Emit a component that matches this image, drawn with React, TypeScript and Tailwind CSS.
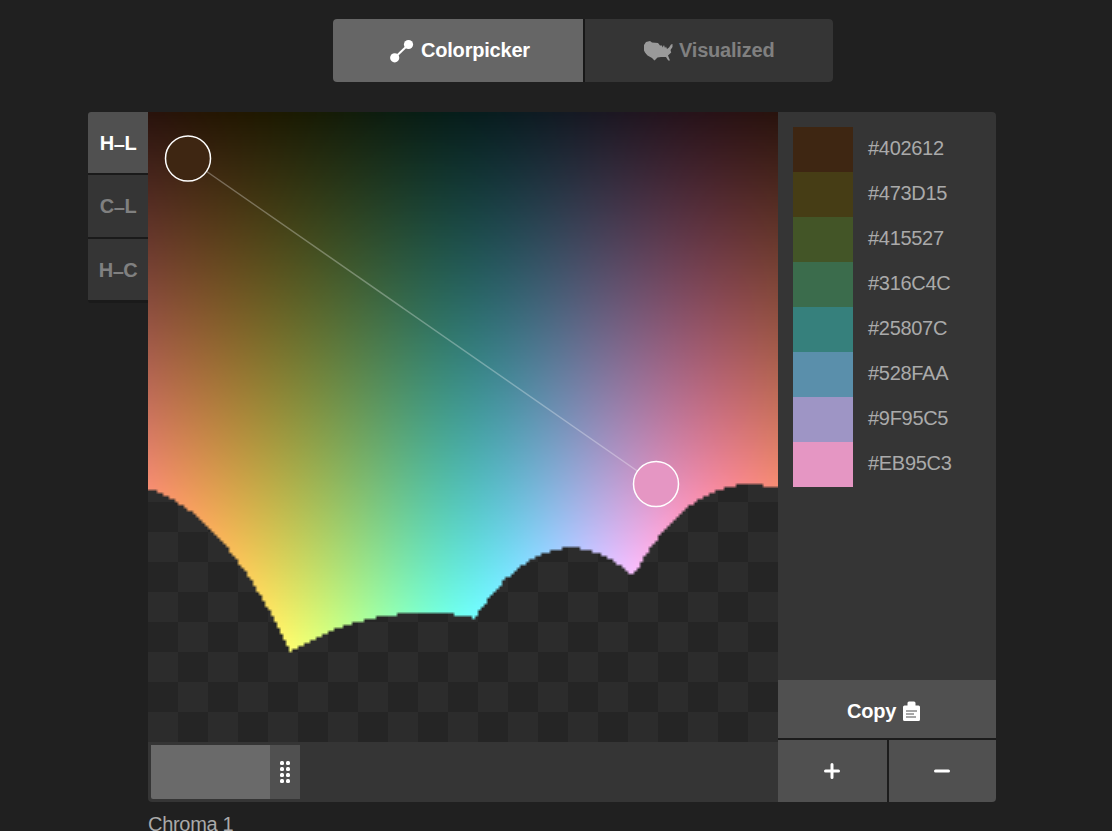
import { useEffect, useRef } from "react";

const SIZE = 210;
const MAX_LIGHTNESS = 1.7;
const CHROMA = 1;

const palette = ["#402612", "#473D15", "#415527", "#316C4C", "#25807C", "#528FAA", "#9F95C5", "#EB95C3"];
const swatches = ["#3E2612", "#463D15", "#435527", "#3B6C4C", "#36807C", "#5A8FAB", "#9E95C5", "#E596C3"];

function finv(t: number) {
  return t > 6 / 29 ? t * t * t : 3 * (6 / 29) * (6 / 29) * (t - 4 / 29);
}

function gamma(v: number) {
  return v <= 0.0031308 ? 12.92 * v : 1.055 * Math.pow(v, 1 / 2.4) - 0.055;
}

const clamp = (v: number) => Math.max(0, Math.min(1, v));

function hclToLinear(h: number, c: number, l: number): number[] {
  const tau = Math.PI * 2;
  const lightness = l * 0.61 + 0.09;
  const angle = tau / 6 - (h / 360) * tau;
  const r = (l * 0.311 + 0.125) * c;
  const a = Math.sin(angle) * r;
  const b = Math.cos(angle) * r;
  const sl = (lightness + 0.16) / 1.16;
  const y = finv(sl);
  const x = 0.96421 * finv(sl + a / 5);
  const z = 0.82519 * finv(sl - b / 2);
  return [
    3.2406 * x - 1.5372 * y - 0.4986 * z,
    -0.9689 * x + 1.8758 * y + 0.0415 * z,
    0.0557 * x - 0.204 * y + 1.057 * z,
  ];
}

function Spectrum() {
  const ref = useRef<HTMLCanvasElement>(null);
  useEffect(() => {
    const ctx = ref.current?.getContext("2d");
    if (!ctx) return;
    const image = ctx.createImageData(SIZE, SIZE);
    for (let y = 0; y < SIZE; y++) {
      for (let x = 0; x < SIZE; x++) {
        const linear = hclToLinear((x / SIZE) * 360, CHROMA, (y / SIZE) * MAX_LIGHTNESS);
        const inside = Math.max(...linear.map(gamma)) <= 1.001;
        const [r, g, b] = linear.map(clamp);
        const i = (y * SIZE + x) * 4;
        image.data[i] = gamma(0.91 * r + 0.09 * g) * 255;
        image.data[i + 1] = gamma(g) * 255;
        image.data[i + 2] = gamma(b) * 255;
        image.data[i + 3] = inside ? 255 : 0;
      }
    }
    ctx.putImageData(image, 0, 0);
  }, []);
  return <canvas ref={ref} width={SIZE} height={SIZE} className="block h-[630px] w-[630px]" />;
}

function SideTab({ from, to, active }: { from: string; to: string; active?: boolean }) {
  return (
    <button
      className={
        active
          ? "flex h-[61px] w-full shrink-0 items-center justify-center rounded-tl-[3px] bg-[#505050] text-white"
          : "flex h-[62px] w-full items-center justify-center bg-[#353535] text-[#808080] last:h-[61px]"
      }
    >
      <span className="tracking-[-0.5px]">
        {from}
        <span className="relative top-[1px]">–</span>
        {to}
      </span>
    </button>
  );
}

export default function App() {
  return (
    <div className="h-[831px] overflow-hidden bg-[#202020] pt-[19px] font-['Liberation_Sans',Arial,sans-serif] text-[20px] leading-[30px] tracking-[-0.2px] text-[#aaaaaa]">
      <nav className="ml-[333px] flex h-[63px] w-[500px] gap-[2px] overflow-hidden rounded-[4px] bg-[#181818] font-bold">
        <button className="flex w-[250px] items-center bg-[#666666] pl-[57px] text-white">
          <svg width="24" height="25" viewBox="0 0 24 25" className="mr-[7px]">
            <path d="M4.700 19.800 18.500 6.500" stroke="#fff" strokeWidth="2" />
            <circle cx="4.700" cy="19.800" r="4.600" fill="#fff" />
            <circle cx="18.500" cy="6.500" r="4.600" fill="#fff" />
          </svg>
          <span className="pb-[2px]">Colorpicker</span>
        </button>
        <button className="flex w-[248px] items-center bg-[#353535] pl-[59px] text-[#808080]">
          <svg width="29" height="20" viewBox="0 0 29 20" className="mr-[6px]">
            <path
              d="M2 1 6 0 8 1.500 14 2 16 4.500 18 4.500 18.500 6.500 20 4 21 7 22 5.500 23 8 25 6.500 27 3.500 28.500 3 28.500 6 26.500 9 27.200 11.500 24 14.500 26 19.500 24.200 19.500 22 16 17 16 13.500 16.500 10.500 19.500 8 17 3.500 14.500 1 11.500 0 9.500V4Z"
              fill="#9a9a9a"
            />
          </svg>
          <span className="pb-[2px]">Visualized</span>
        </button>
      </nav>

      <main className="mt-[30px] ml-[88px] flex h-[690px] w-[908px]">
        <aside className="w-[60px] font-bold">
          <div className="flex h-[191px] flex-col gap-[2px] rounded-l-[3px] bg-[#1a1a1a]">
            <SideTab from="H" to="L" active />
            <SideTab from="C" to="L" />
            <SideTab from="H" to="C" />
          </div>
        </aside>

        <section className="w-[630px]">
          <div className="relative h-[630px] bg-[conic-gradient(#252525_25%,#2c2c2c_0_50%,#252525_0_75%,#2c2c2c_0)] bg-[length:60px_60px]">
            <Spectrum />
            <svg width="630" height="630" className="absolute top-0 left-0">
              <path d="M40 46.500 508 372" stroke="#fff" strokeOpacity="0.3" strokeWidth="1.500" />
              <circle cx="40" cy="46.500" r="22.500" fill="#3E2612" stroke="#fff" strokeWidth="1.500" />
              <circle cx="508" cy="372" r="22.500" fill="#E596C3" stroke="#fff" strokeWidth="1.500" />
            </svg>
          </div>
          <div className="flex h-[60px] rounded-bl-[4px] bg-[#353535] p-[3px]">
            <div className="w-[119px] rounded-bl-[2px] bg-[#6a6a6a]" />
            <div className="flex w-[30px] items-center justify-center bg-[#505050]">
              <div className="grid grid-cols-2 gap-[2px]">
                {[0, 1, 2, 3, 4, 5, 6, 7].map((i) => (
                  <span key={i} className="size-[4px] rounded-[1.5px] bg-white" />
                ))}
              </div>
            </div>
          </div>
          <div className="pt-[7px] tracking-[-0.3px]">Chroma 1</div>
        </section>

        <aside className="flex w-[218px] flex-col overflow-hidden rounded-r-[4px] bg-[#353535]">
          <ul className="flex-1 p-[15px]">
            {palette.map((code, i) => (
              <li key={code} className="flex h-[45px] items-center">
                <span className="mr-[15px] h-[45px] w-[60px]" style={{ backgroundColor: swatches[i] }} />
                <span className="pb-[3px] tracking-[-0.3px]">{code}</span>
              </li>
            ))}
          </ul>
          <div className="flex h-[122px] flex-col gap-[2px] bg-[#1c1c1c]">
            <button className="flex h-[58px] items-center bg-[#505050] pt-[3px] pl-[69px] font-bold text-white">
              <span className="w-[56px] text-left">Copy</span>
              <svg width="17" height="20" viewBox="0 0 17 20">
                <path
                  d="M4.500 4.500V2Q4.500 .5 6 .5H11Q12.500 .5 12.500 2V4.500H15.500Q17 4.500 17 6V18.500Q17 20 15.500 20H1.500Q0 20 0 18.500V6Q0 4.500 1.500 4.500Z"
                  fill="#fff"
                />
                <path d="M3 10H14M3 13H11M3 16H13" stroke="#505050" strokeWidth="1.200" />
              </svg>
            </button>
            <div className="flex flex-1 gap-[2px]">
              <button className="flex w-[109px] items-center justify-center bg-[#505050] pr-[1px] pb-[1px]">
                <svg width="16" height="16" viewBox="0 0 16 16">
                  <path d="M8 1.500V14.500M1.500 8H14.500" stroke="#fff" strokeWidth="3" strokeLinecap="round" />
                </svg>
              </button>
              <button className="flex w-[107px] items-center justify-center bg-[#505050] pr-[1px] pb-[1px]">
                <svg width="16" height="16" viewBox="0 0 16 16">
                  <path d="M1.500 8H14.500" stroke="#fff" strokeWidth="3" strokeLinecap="round" />
                </svg>
              </button>
            </div>
          </div>
        </aside>
      </main>
    </div>
  );
}
